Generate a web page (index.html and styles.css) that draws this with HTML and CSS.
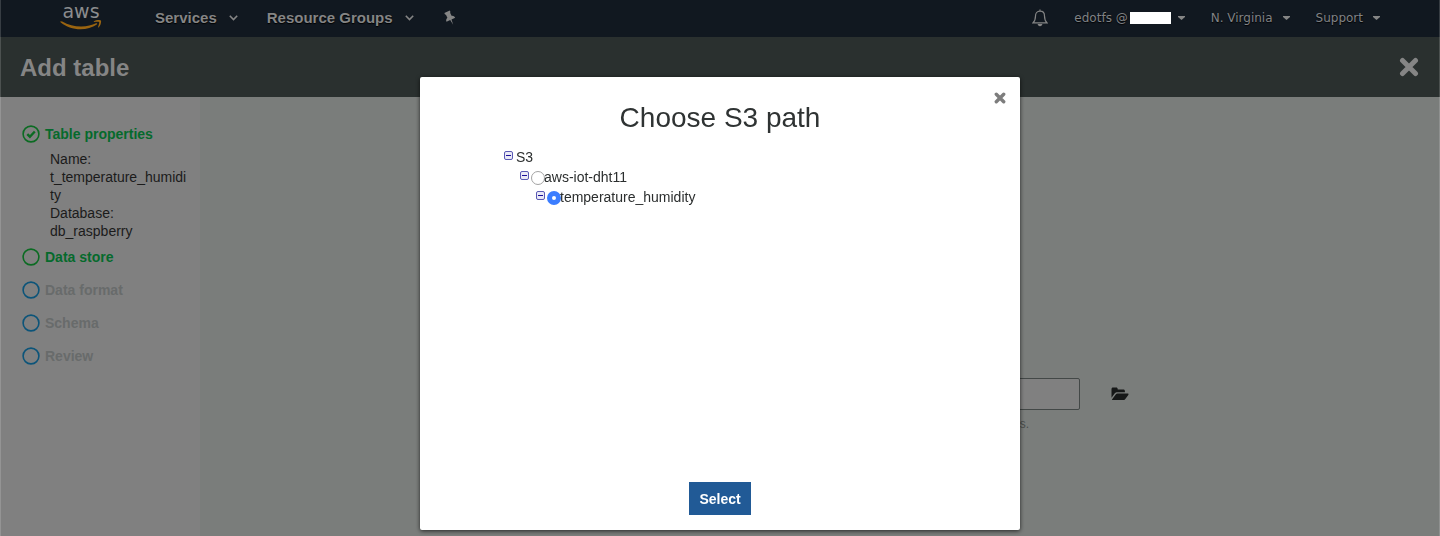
FILE: index.html
```html
<!DOCTYPE html>
<html lang="en">
<head>
<meta charset="utf-8">
<title>Add table</title>
<meta name="viewport" content="width=device-width, initial-scale=1">
<link rel="stylesheet" href="styles.css">
</head>
<body>
<div class="app">
  <header class="nav">
    <a class="logo" href="#">
      <span class="logo-word">aws</span>
      <svg class="logo-smile" viewBox="0 0 42 10" aria-hidden="true"><path d="M.4 1.6C.7.9 1.5 1.1 2.200 1.600C8 5 15 6.700 21.500 6.600c5.500 0 10.500-1.400 14.500-3.300.9-.4 1.700.5.8 1.200C32.500 7.700 26.300 9.300 20.700 9.300 12.800 9.300 6 6.500.8 2.500.5 2.200.2 1.900.4 1.600z"/><path d="M33.800 1.500C36-.2 40.300-.1 40.900.6c.6.8-.1 4.900-2.100 6.700-.5.4-.9.2-.7-.4.6-1.500 1.500-4.300 1-4.900-.5-.6-3.300-.3-4.700-.1-.6.100-.8-.2-.6-.4z"/></svg>
    </a>
    <nav class="nav-main">
      <button class="nav-item" type="button">Services <svg class="chev" viewBox="0 0 9 6" aria-hidden="true"><path d="M.8.800l3.700 3.700L8.200.800"/></svg></button>
      <button class="nav-item" type="button">Resource Groups <svg class="chev" viewBox="0 0 9 6" aria-hidden="true"><path d="M.8.800l3.700 3.700L8.200.800"/></svg></button>
      <button class="nav-item" type="button" aria-label="Pin shortcuts"><svg class="pin" viewBox="0 0 14 16" aria-hidden="true"><g transform="rotate(-25 7 8)"><path d="M4 1h6v2H9.300v3.700c1.600.5 2.500 1.700 2.500 3.300H7.700L7 15.500 6.300 10H2.200c0-1.600.9-2.800 2.500-3.300V3H4z"/></g></svg></button>
    </nav>
    <div class="nav-side">
      <button class="nav-small" type="button" aria-label="Notifications"><svg class="bell" viewBox="0 0 16 18" aria-hidden="true"><path class="bell-line" d="M8 2.200c-3 0-4.500 2-4.500 4.800 0 4-1 5.500-2.600 6.900h14.200c-1.600-1.400-2.600-2.900-2.600-6.900C12.500 4.200 11 2.200 8 2.200zM8 .5v1.700"/><path class="bell-fill" d="M5.700 15h4.600c0 1.300-1 2.200-2.300 2.200S5.700 16.300 5.700 15z"/></svg></button>
      <button class="nav-small account" type="button">edotfs @<span class="mask"></span><svg class="caret" viewBox="0 0 7 4" aria-hidden="true"><path d="M0 0h7v1L3.500 4 0 1z"/></svg></button>
      <button class="nav-small" type="button">N. Virginia <svg class="caret" viewBox="0 0 7 4" aria-hidden="true"><path d="M0 0h7v1L3.500 4 0 1z"/></svg></button>
      <button class="nav-small" type="button">Support <svg class="caret" viewBox="0 0 7 4" aria-hidden="true"><path d="M0 0h7v1L3.500 4 0 1z"/></svg></button>
    </div>
  </header>

  <div class="titlebar">
    <h1>Add table</h1>
    <button class="close-page" type="button" aria-label="Close"><svg viewBox="0 0 20 20" aria-hidden="true"><path d="M3.500 3.500l13 13M16.500 3.500l-13 13"/></svg></button>
  </div>

  <div class="body">
    <aside class="steps">
      <ol>
        <li class="step done">
          <svg class="dot" viewBox="0 0 18 18" aria-hidden="true"><circle cx="9" cy="9" r="7.900"/><path d="M5.300 9.100l2.600 2.600 4.900-5.200"/></svg>
          <span>Table properties</span>
          <div class="detail">Name:<br>t_temperature_humidity<br>Database:<br>db_raspberry</div>
        </li>
        <li class="step done"><svg class="dot" viewBox="0 0 18 18" aria-hidden="true"><circle cx="9" cy="9" r="7.900"/></svg><span>Data store</span></li>
        <li class="step"><svg class="dot" viewBox="0 0 18 18" aria-hidden="true"><circle cx="9" cy="9" r="7.900"/></svg><span>Data format</span></li>
        <li class="step"><svg class="dot" viewBox="0 0 18 18" aria-hidden="true"><circle cx="9" cy="9" r="7.900"/></svg><span>Schema</span></li>
        <li class="step"><svg class="dot" viewBox="0 0 18 18" aria-hidden="true"><circle cx="9" cy="9" r="7.900"/></svg><span>Review</span></li>
      </ol>
    </aside>
    <main class="content">
      <div class="field">
        <input class="path" type="text" aria-label="S3 path">
        <button class="browse" type="button" aria-label="Browse"><svg viewBox="0 0 18 14" aria-hidden="true"><path d="M.5 10.800V2C.5 1.100 1.100.5 2 .5h3.200c.9 0 1.500.6 1.500 1.500v.4h5.700c.9 0 1.500.6 1.500 1.500v1.400H6.300c-1 0-2 .5-2.700 1.300z"/><path d="M1.200 12.200l3.500-4.700c.4-.6 1.100-.9 1.900-.9h10c.9 0 1.200.6.7 1.300l-3.200 4.300c-.5.6-1.100.9-1.900.9H1.900c-.9 0-1.100-.4-.7-.9z"/></svg></button>
        <p class="hint">s.</p>
      </div>
    </main>
  </div>
</div>

<div class="overlay">
  <section class="modal" role="dialog" aria-labelledby="modal-title">
    <button class="close-modal" type="button" aria-label="Close dialog"><svg viewBox="0 0 12 12" aria-hidden="true"><path d="M2.300 2.300l7.400 7.400M9.700 2.300L2.300 9.700"/></svg></button>
    <h2 id="modal-title">Choose S3 path</h2>
    <ul class="tree">
      <li>
        <div class="row"><button class="toggle" type="button" aria-label="Collapse S3"></button><span>S3</span></div>
        <ul>
          <li>
            <div class="row"><button class="toggle" type="button" aria-label="Collapse aws-iot-dht11"></button><input type="radio" name="path" id="bucket"><label for="bucket">aws-iot-dht11</label></div>
            <ul>
              <li><div class="row"><button class="toggle" type="button" aria-label="Collapse temperature_humidity"></button><input type="radio" name="path" id="folder" checked><label for="folder">temperature_humidity</label></div></li>
            </ul>
          </li>
        </ul>
      </li>
    </ul>
    <button class="select" type="button">Select</button>
  </section>
</div>
</body>
</html>
```
FILE: styles.css
```css
* { box-sizing: border-box; }

body {
  margin: 0;
  font: 14px/18px "Liberation Sans", Arial, sans-serif;
  color: #1b1b1b;
}

button {
  margin: 0;
  padding: 0;
  border: 0;
  background: none;
  font: inherit;
  color: inherit;
  cursor: pointer;
}

svg { display: block; flex: none; }

ul, ol { list-style: none; margin: 0; padding: 0; }

.app {
  display: flex;
  flex-direction: column;
  min-height: 100vh;
}

/* Top navigation */
.nav {
  display: flex;
  align-items: center;
  height: 37px;
  padding: 0 60px 2px;
  background: #111820;
  color: #858585;
}

.logo {
  display: flex;
  flex-direction: column;
  align-self: flex-start;
  width: 42px;
  margin-right: 53px;
  color: #8b8c8e;
  text-decoration: none;
}

.logo-word {
  font: 19px/23px "DejaVu Sans", Verdana, sans-serif;
  text-align: center;
}

.logo-smile { width: 42px; height: 10px; margin-top: -3px; fill: #9a6410; }

.nav-main { display: flex; align-items: center; gap: 29px; }

.nav-item {
  display: flex;
  align-items: center;
  gap: 12px;
  font-size: 15px;
  font-weight: 700;
  text-shadow: 0 1px 1px #000;
}

.chev { width: 9px; height: 6px; fill: none; stroke: #858585; stroke-width: 1.6; }

.pin { width: 14px; height: 16px; fill: #858585; }

.nav-side {
  display: flex;
  align-items: center;
  gap: 26px;
  margin-left: auto;
}

.nav-small {
  display: flex;
  align-items: center;
  gap: 10px;
  font: 12px/18px "DejaVu Sans", Verdana, sans-serif;
  color: #808285;
  text-shadow: 0 1px 1px #000;
}

.account { gap: 7px; }

.mask { width: 41px; height: 12px; margin-left: -5px; background: #fff; }

.bell { width: 16px; height: 18px; }
.bell-line { fill: none; stroke: #858585; stroke-width: 1.2; }
.bell-fill { fill: #858585; }

.caret { width: 7px; height: 4px; fill: #858585; }

/* Page title */
.titlebar {
  display: flex;
  align-items: center;
  justify-content: space-between;
  height: 60px;
  padding: 0 21px 0 20px;
  background: #2a302f;
  color: #858585;
}

.titlebar h1 { margin: 0; padding-top: 2px; font-size: 24px; line-height: 30px; }

.close-page svg {
  width: 20px;
  height: 20px;
  fill: none;
  stroke: #858585;
  stroke-width: 5;
  stroke-linecap: round;
}

/* Wizard */
.body { display: flex; flex: 1; }

.steps {
  width: 200px;
  padding: 28px 12px 0 22px;
  background: #808080;
}

.steps ol { display: grid; gap: 15px; }

.step {
  display: grid;
  grid-template-columns: 18px 1fr;
  column-gap: 5px;
  align-items: center;
  font-weight: 700;
  color: #686b6b;
}

.step.done { color: #056a2c; }

.dot {
  width: 18px;
  height: 18px;
  fill: none;
  stroke: #0c5479;
  stroke-width: 1.6;
}

.done .dot { stroke: #0b6b22; }
.done .dot path { stroke-width: 2.4; }

.detail {
  grid-column: 1 / -1;
  padding: 7px 0 0 28px;
  margin-bottom: -7px;
  font-weight: 400;
  color: #1b1b1b;
  overflow-wrap: anywhere;
}

.content { flex: 1; padding-top: 281px; background: #7a7d7b; }

.field {
  display: grid;
  grid-template-columns: 1fr minmax(0, 520px) 1fr;
  column-gap: 31px;
  align-items: center;
}

.path {
  grid-column: 2;
  width: 100%;
  height: 32px;
  border: 1px solid #434847;
  border-radius: 2px;
  background: #808080;
}

.browse { justify-self: start; color: #161818; }
.browse svg { width: 18px; height: 14px; fill: #161818; }

.hint {
  grid-column: 2;
  margin: 5px 0 0;
  padding-right: 51px;
  font-size: 12px;
  text-align: right;
  color: #4a4e4d;
}

/* Dialog */
.overlay {
  position: fixed;
  inset: 0;
  display: flex;
  justify-content: center;
  padding: 77px 16px 6px;
  border: solid rgba(255, 255, 255, 0.16);
  border-width: 0 1px;
}

.modal {
  position: relative;
  display: flex;
  flex-direction: column;
  width: 600px;
  padding: 25px 0 15px;
  border-radius: 2px;
  background: #fff;
  box-shadow: 0 1px 4px rgba(0, 0, 0, 0.7);
}

.modal h2 {
  margin: 0;
  font-size: 28px;
  font-weight: 400;
  line-height: 32px;
  text-align: center;
  color: #2f3333;
}

.close-modal { position: absolute; top: 15px; right: 14px; }

.close-modal svg {
  width: 12px;
  height: 12px;
  fill: none;
  stroke: #7d7d7d;
  stroke-width: 3.4;
  stroke-linecap: round;
}

.tree { padding: 13px 0 0 84px; color: #2b2e2e; }
.tree ul { padding-left: 16px; }

.row { display: flex; align-items: center; height: 20px; }

.toggle {
  width: 9px;
  height: 9px;
  margin: 0 3px 3px 0;
  border: 1px solid #5a5ab4;
  border-radius: 2px;
  background: linear-gradient(#1b0f9a, #1b0f9a) center / 5px 1px no-repeat, #e9e9f6;
}

.row input {
  appearance: none;
  width: 14px;
  height: 14px;
  margin: 1px -1px 0 -1px;
  border: 1px solid #a3a3a3;
  border-radius: 50%;
  background: #fff;
}

.row input:checked { border: 5px solid #3b7dff; }

.select {
  align-self: center;
  height: 33px;
  margin-top: auto;
  padding: 0 10px;
  background: #215a96;
  color: #fff;
  font-weight: 700;
}
```
